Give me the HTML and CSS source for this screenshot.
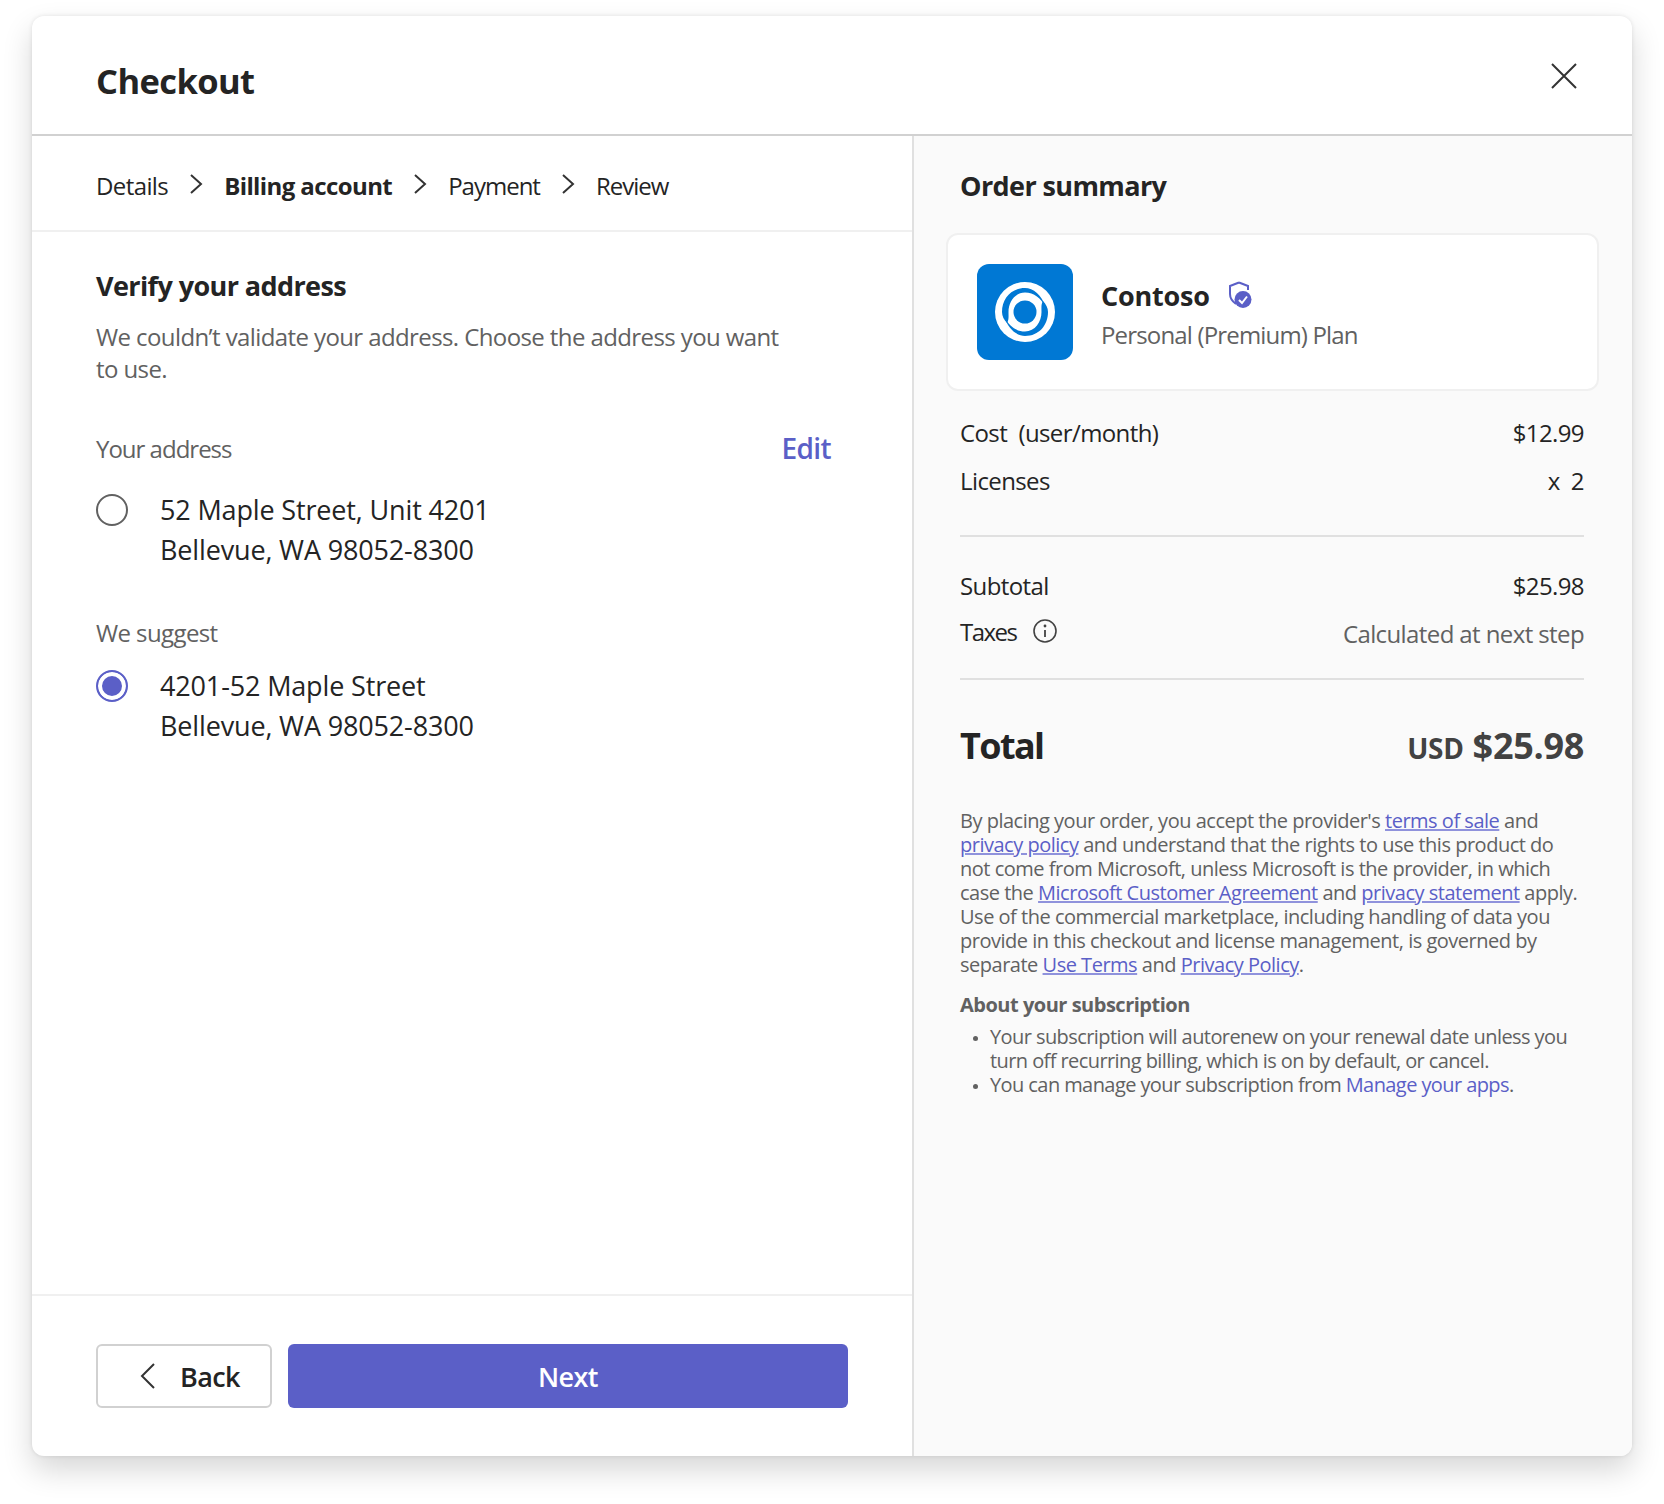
FILE: index.html
```html
<!DOCTYPE html>
<html>
<head>
    <meta charset="UTF-8">
    <meta name="viewport" content="width=device-width, initial-scale=1.0">
    <title>Checkout</title>
    <link rel="stylesheet" href="styles.css">
</head>
<body>
    <div class="checkout">
        <header class="checkout-header">
            <h1>Checkout</h1>
            <button class="close-button" aria-label="Close">
                <svg width="26" height="26" viewBox="0 0 26 26"><path d="M1 1 25 25M25 1 1 25" fill="none" stroke="#333" stroke-width="2"/></svg>
            </button>
        </header>
        <div class="checkout-body">
            <main class="left-pane">
                <nav class="steps">
                    <span>Details</span>
                    <svg class="chevron" width="14" height="20" viewBox="0 0 14 20"><path d="M2 1 12 10 2 19" fill="none" stroke="#333" stroke-width="2"/></svg>
                    <span class="current">Billing account</span>
                    <svg class="chevron" width="14" height="20" viewBox="0 0 14 20"><path d="M2 1 12 10 2 19" fill="none" stroke="#333" stroke-width="2"/></svg>
                    <span class="tight">Payment</span>
                    <svg class="chevron" width="14" height="20" viewBox="0 0 14 20"><path d="M2 1 12 10 2 19" fill="none" stroke="#333" stroke-width="2"/></svg>
                    <span class="tight">Review</span>
                </nav>
                <section class="address-form">
                    <h2>Verify your address</h2>
                    <p class="intro">We couldn’t validate your address. Choose the address you want to use.</p>
                    <div class="address-label-row">
                        <span class="muted tight">Your address</span>
                        <a class="edit-link" href="#">Edit</a>
                    </div>
                    <label class="address-option">
                        <span class="radio"></span>
                        <span>52 Maple Street, Unit 4201<br>Bellevue, WA 98052-8300</span>
                    </label>
                    <div class="suggest-label muted">We suggest</div>
                    <label class="address-option suggested">
                        <span class="radio checked"></span>
                        <span>4201-52 Maple Street<br>Bellevue, WA 98052-8300</span>
                    </label>
                </section>
                <footer class="actions">
                    <button class="back-button">
                        <svg width="16" height="26" viewBox="0 0 16 26"><path d="M14 1 2 13 14 25" fill="none" stroke="#333" stroke-width="2"/></svg>
                        Back
                    </button>
                    <button class="next-button">Next</button>
                </footer>
            </main>
            <aside class="summary">
                <h2>Order summary</h2>
                <div class="product-card">
                    <div class="product-logo">
                        <svg width="64" height="64" viewBox="0 0 64 64">
                            <circle cx="32" cy="32" r="30" fill="#fff"/>
                            <circle cx="32" cy="32" r="11.5" fill="#0078d4"/>
                            <path d="M52.5 27C49 15 40 8 32 8 18 8 9 19 9 32 9 36 11 40 14 43 16 40 15.5 36 15.5 32 15.5 22 22 12.5 32 12.5 41 12.5 48 18 52.5 27Z" fill="#0078d4"/>
                            <path d="M52.5 27C49 15 40 8 32 8 18 8 9 19 9 32 9 36 11 40 14 43 16 40 15.5 36 15.5 32 15.5 22 22 12.5 32 12.5 41 12.5 48 18 52.5 27Z" fill="#0078d4" transform="rotate(180 32 32)"/>
                        </svg>
                    </div>
                    <div class="product-text">
                        <div class="product-name">
                            Contoso
                            <svg width="28" height="28" viewBox="0 0 28 28">
                                <path d="M11 1.5 2 5V13C2 17 4.5 20.5 8 23" fill="none" stroke="#5b5fc7" stroke-width="2"/>
                                <path d="M11 1.5 20 5V9" fill="none" stroke="#5b5fc7" stroke-width="2"/>
                                <circle cx="15" cy="18.5" r="8.5" fill="#5b5fc7"/>
                                <path d="M11 19 14 22 19 15.5" fill="none" stroke="#fff" stroke-width="2"/>
                            </svg>
                        </div>
                        <div class="product-plan">Personal (Premium) Plan</div>
                    </div>
                </div>
                <div class="price-group first">
                    <div class="price-row"><span>Cost&nbsp; (user/month)</span><span>$12.99</span></div>
                    <div class="price-row"><span>Licenses</span><span>x&nbsp; 2</span></div>
                </div>
                <div class="price-group">
                    <div class="price-row"><span>Subtotal</span><span>$25.98</span></div>
                    <div class="price-row">
                        <span class="taxes"><span class="taxes-label">Taxes</span>
                            <svg width="24" height="24" viewBox="0 0 24 24"><circle cx="12" cy="12" r="11" fill="none" stroke="#424242" stroke-width="1.6"/><circle cx="12" cy="7" r="1.4" fill="#424242"/><path d="M12 11V18" stroke="#424242" stroke-width="1.8"/></svg>
                        </span>
                        <span class="muted">Calculated at next step</span>
                    </div>
                </div>
                <div class="total-row">
                    <span class="total-label">Total</span>
                    <span class="total-price"><small>USD</small> $25.98</span>
                </div>
                <div class="legal">
                    <p>By placing your order, you accept the provider's <a href="#">terms of sale</a> and <a href="#">privacy policy</a> and understand that the rights to use this product do not come from Microsoft, unless Microsoft is the provider, in which case the <a href="#">Microsoft Customer Agreement</a> and <a href="#">privacy statement</a> apply. Use of the commercial marketplace, including handling of data you provide in this checkout and license management, is governed by separate <a href="#">Use Terms</a> and <a href="#">Privacy Policy</a>.</p>
                    <h3>About your subscription</h3>
                    <ul>
                        <li>Your subscription will autorenew on your renewal date unless you turn off recurring billing, which is on by default, or cancel.</li>
                        <li>You can manage your subscription from <a class="plain" href="#">Manage your apps</a>.</li>
                    </ul>
                </div>
            </aside>
        </div>
    </div>
</body>
</html>
```

FILE: styles.css
```css
html, body {
    height: 100%;
}
body {
    box-sizing: border-box;
    margin: 0;
    padding: 16px 32px 0;
    background-color: #fff;
    color: #242424;
    font-family: "Open Sans", "Noto Sans", Arial, sans-serif;
    font-size: 24px;
    letter-spacing: -0.6px;
}
h1, h2, h3, p {
    margin: 0;
}
button {
    font-family: inherit;
    letter-spacing: inherit;
    cursor: pointer;
}
a {
    color: #5b5fc7;
}
.muted {
    color: #616161;
}
.tight {
    letter-spacing: -1px;
}
.checkout {
    display: flex;
    flex-direction: column;
    width: 1600px;
    height: 1440px;
    background-color: #fff;
    border-radius: 12px;
    overflow: hidden;
    box-shadow: 0 14px 30px rgba(0, 0, 0, 0.16), 0 0 4px rgba(0, 0, 0, 0.1);
}
.checkout-header {
    box-sizing: border-box;
    height: 120px;
    flex-shrink: 0;
    display: flex;
    align-items: center;
    justify-content: space-between;
    padding: 12px 55px 0 64px;
    border-bottom: 2px solid #d1d1d1;
}
.checkout-header h1 {
    font-size: 34.5px;
    font-weight: 700;
    line-height: 48px;
}
.close-button {
    background: none;
    border: none;
    padding: 0;
    display: flex;
    margin-top: -10px;
}
.checkout-body {
    flex: 1;
    display: flex;
    min-height: 0;
}
.left-pane {
    width: 880px;
    display: flex;
    flex-direction: column;
}
.steps {
    box-sizing: border-box;
    height: 96px;
    display: flex;
    align-items: center;
    padding: 4px 0 0 64px;
    border-bottom: 2px solid #f0f0f0;
}
.steps .chevron {
    margin: -2px 21px 0;
}
.steps .current {
    font-weight: 700;
}
.address-form {
    flex: 1;
    padding: 34px 64px 0;
}
.address-form h2 {
    font-size: 27px;
    font-weight: 700;
    line-height: 40px;
}
.intro {
    width: 700px;
    margin-top: 15px;
    line-height: 32px;
    color: #616161;
}
.address-label-row {
    display: flex;
    align-items: center;
    justify-content: space-between;
    width: 735px;
    margin-top: 43px;
    height: 40px;
}
.edit-link {
    font-size: 28px;
    font-weight: 600;
    text-decoration: none;
}
.address-option {
    display: flex;
    gap: 32px;
    margin-top: 22px;
    font-size: 27px;
    line-height: 40px;
    letter-spacing: -0.15px;
}
.address-option.suggested {
    margin-top: 13px;
}
.radio {
    box-sizing: border-box;
    width: 32px;
    height: 32px;
    margin-top: 4px;
    flex-shrink: 0;
    border: 2px solid #616161;
    border-radius: 50%;
}
.radio.checked {
    border-color: #5b5fc7;
    background-color: #5b5fc7;
    box-shadow: inset 0 0 0 4px #fff;
}
.suggest-label {
    margin-top: 43px;
    line-height: 40px;
}
.actions {
    box-sizing: border-box;
    height: 162px;
    display: flex;
    gap: 16px;
    padding: 48px 64px 0;
    border-top: 2px solid #f0f0f0;
}
.back-button {
    box-sizing: border-box;
    width: 176px;
    height: 64px;
    display: flex;
    align-items: center;
    justify-content: center;
    gap: 24px;
    padding: 0 0 0 12px;
    background-color: #fff;
    border: 2px solid #d1d1d1;
    border-radius: 6px;
    color: #242424;
    font-size: 27px;
    font-weight: 600;
}
.next-button {
    width: 560px;
    height: 64px;
    background-color: #5b5fc7;
    border: none;
    border-radius: 6px;
    color: #fff;
    font-size: 27px;
    font-weight: 600;
}
.summary {
    flex: 1;
    padding: 0 33px 0 32px;
    background-color: #fafafa;
    border-left: 2px solid #e0e0e0;
}
.summary h2 {
    margin: 30px 0 0 14px;
    font-size: 27px;
    font-weight: 700;
    line-height: 40px;
}
.product-card {
    box-sizing: border-box;
    height: 158px;
    margin-top: 27px;
    display: flex;
    align-items: center;
    gap: 28px;
    padding-left: 29px;
    background-color: #fff;
    border: 2px solid #f0f0f0;
    border-radius: 12px;
}
.product-logo {
    width: 96px;
    height: 96px;
    display: flex;
    align-items: center;
    justify-content: center;
    background-color: #0078d4;
    border-radius: 12px;
}
.product-text {
    padding-top: 5px;
}
.product-name {
    display: flex;
    align-items: center;
    gap: 18px;
    font-size: 27px;
    font-weight: 700;
    line-height: 40px;
    letter-spacing: -0.2px;
}
.product-name svg {
    margin-top: -3px;
}
.product-plan {
    color: #616161;
    line-height: 37px;
    letter-spacing: -0.83px;
}
.price-group {
    margin: 0 15px 0 14px;
    padding: 24px 0 21px;
    border-bottom: 2px solid #e0e0e0;
}
.price-group.first {
    padding-top: 17px;
    padding-bottom: 31px;
}
.price-row {
    display: flex;
    align-items: center;
    justify-content: space-between;
    height: 48px;
}
.taxes {
    display: flex;
    align-items: center;
    gap: 16px;
    margin-bottom: 4px;
}
.taxes-label {
    letter-spacing: -1.5px;
}
.total-row {
    display: flex;
    align-items: center;
    justify-content: space-between;
    margin: 35px 15px 0 14px;
    height: 60px;
    font-size: 36px;
    font-weight: 700;
}
.total-label {
    letter-spacing: -1.6px;
}
.total-price {
    color: #424242;
    letter-spacing: -0.3px;
}
.total-price small {
    font-size: 28px;
}
.legal {
    margin: 34px 15px 0 14px;
    color: #616161;
    font-size: 20px;
    line-height: 24px;
    letter-spacing: -0.49px;
}
.legal a {
    text-decoration-color: #8f92dc;
}
.legal h3 {
    margin-top: 14px;
    font-size: 20px;
    font-weight: 700;
    line-height: 28px;
}
.legal ul {
    margin: 6px 0 0;
    padding-left: 30px;
    letter-spacing: -0.58px;
}
.legal li::marker {
    font-size: 14px;
}
.legal a.plain {
    text-decoration: none;
}
```
